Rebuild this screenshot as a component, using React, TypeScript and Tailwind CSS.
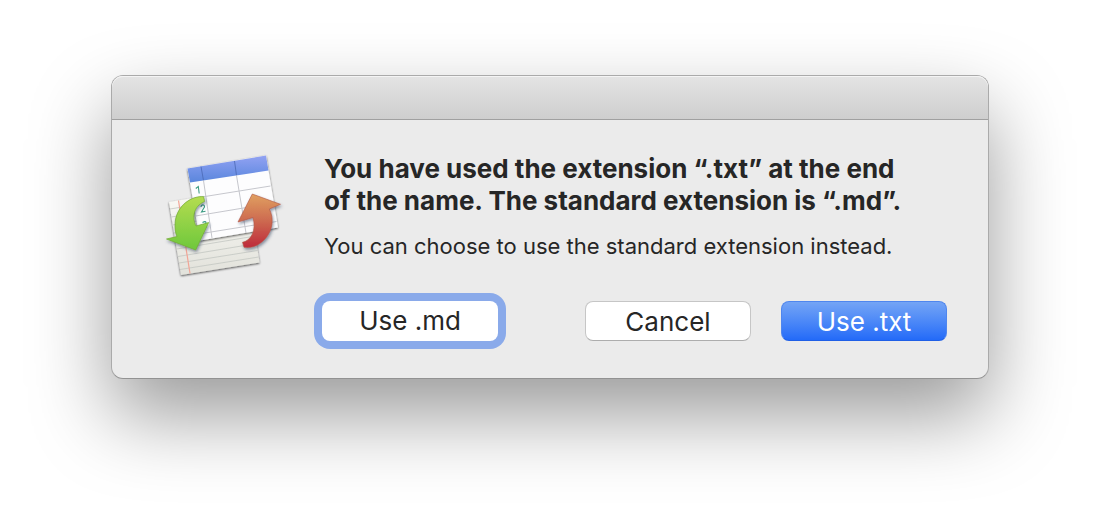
import React from 'react';

const AppIcon = () => (
  <svg viewBox="0 0 140 140" className="w-[140px] h-[140px] shrink-0" aria-hidden="true">
    <defs>
      <linearGradient id="header" x1="0" y1="0" x2="0" y2="1">
        <stop offset="0" stopColor="#92a2f2" />
        <stop offset="0.5" stopColor="#7594e8" />
        <stop offset="1" stopColor="#5a86dc" />
      </linearGradient>
      <linearGradient id="paper" x1="0" y1="0" x2="0" y2="1">
        <stop offset="0" stopColor="#fbfbf7" />
        <stop offset="1" stopColor="#e2e2db" />
      </linearGradient>
      <linearGradient id="green" x1="0" y1="0" x2="0" y2="1">
        <stop offset="0" stopColor="#b4dc50" />
        <stop offset="1" stopColor="#6ec83c" />
      </linearGradient>
      <linearGradient id="red" x1="0" y1="0" x2="0" y2="1">
        <stop offset="0" stopColor="#e0a060" />
        <stop offset="0.5" stopColor="#cd6a50" />
        <stop offset="1" stopColor="#be2a3a" />
      </linearGradient>
      <filter id="drop" x="-20%" y="-20%" width="140%" height="140%">
        <feDropShadow dx="0" dy="1" stdDeviation="1.3" floodColor="#000" floodOpacity="0.7" />
      </filter>
      <filter id="arrowDrop" x="-20%" y="-20%" width="140%" height="140%">
        <feDropShadow dx="1" dy="2" stdDeviation="1.5" floodColor="#23304f" floodOpacity="0.5" />
      </filter>
    </defs>

    <g filter="url(#drop)">
      <path d="M14 57L93 44L104.500 117.500L26 130Z" fill="url(#paper)" />
    </g>
    <g stroke="#c3c6c1" strokeWidth="0.8">
      <path d="M15 64L94 51M16.300 72L95.300 59M17.600 80L96.600 67M19 88L98 75M20.300 96L99.300 83M21.600 104L100.600 91M23 111.500L101.600 98.500M24 118L102.600 105.500M25 124.500L103.600 112" />
    </g>
    <path d="M23.500 55.500L35 128.500" stroke="#f2a596" strokeWidth="1.200" />

    <g filter="url(#drop)">
      <path d="M32.500 23.500L111 10.500L123 82.500L45 95.500Z" fill="#fdfdfe" />
    </g>
    <path d="M32.500 23.500L111 10.500L113.500 25.500L35 37.500Z" fill="url(#header)" />
    <path d="M46 21.500L48.500 35.500M79.500 16L81.500 30.500" stroke="#4a68b4" strokeWidth="0.8" />
    <g stroke="#c6c7cd" strokeWidth="1" fill="none">
      <path d="M48.500 35.500L57 93M81.500 30.500L91 88M37.500 53.500L115.500 41M40.500 71L118.500 58M43.500 89L121.500 76.500" />
    </g>
    <g fill="none" stroke="#3c9c84" strokeWidth="1.100">
      <path d="M40.800 43.500L43.300 41.500L44.200 48.500" />
      <path d="M46 62Q46.500 59.500 48.500 60Q50.500 61 48.500 63.500L46.500 67L50.500 66.300" />
      <path d="M47.500 77.500Q51 75.500 51 78Q51 79.500 49 79.700Q52 80 51 82.500" />
    </g>

    <path
      d="M48.700 51.700C37 50.500 22.500 60 20.300 76C19.600 82.500 20.300 88 22 91.500L11.500 94L40.700 105L53.700 77.500L41 81C37 73 38 61.500 49.500 56.500Z"
      fill="url(#green)" stroke="#72aa32" strokeWidth="0.7" filter="url(#arrowDrop)"
    />
    <path
      d="M97.300 49L125.500 59.300L114.300 64C119 73 118 85 110 94C103 101.500 96 103 89 102.300L87.500 97.300C96.500 95.500 101.500 85 98 72.500L83 77Z"
      fill="url(#red)" stroke="#b05845" strokeWidth="0.6" filter="url(#arrowDrop)"
    />
  </svg>
);

const App = () => {
  return (
    <main className="min-h-screen bg-white px-[111px] py-[75px] font-['Inter',sans-serif] text-[#262626]">
      <div
        role="alertdialog"
        aria-labelledby="dialog-title"
        aria-describedby="dialog-text"
        className="w-full rounded-xl border border-[#aaaaaa] border-b-[#929292] bg-[#ebebeb] shadow-[0_36px_80px_rgba(0,0,0,0.4)]"
      >
        <div className="h-11 rounded-t-[11px] border-b border-[#a0a0a0] bg-linear-to-b from-[#e4e4e4] to-[#cecece] shadow-[inset_0_1px_0_#f4f4f4]" />
        <div className="flex gap-[27px] pt-[25px] pr-[41px] pb-[37px] pl-[43px]">
          <AppIcon />
          <div className="min-w-0 flex-1 pt-2">
            <h1 id="dialog-title" className="pl-0.5 text-[26px] leading-8 font-bold">
              You have used the extension “.txt” at the end
              <br />
              of the name. The standard extension is “.md”.
            </h1>
            <p id="dialog-text" className="mt-[13px] pl-0.5 text-[22px] leading-8">
              You can choose to use the standard extension instead.
            </p>
            <div className="mt-[39px] flex items-center justify-between text-[26px]">
              <button
                type="button"
                className="h-10 w-[176px] rounded-lg bg-white pb-0.5 shadow-[0_0_0_8px_#8aaaea] outline-none"
              >
                Use .md
              </button>
              <div className="flex gap-[30px]">
                <button
                  type="button"
                  className="h-10 w-[166px] rounded-lg border border-[#c6c6c6] border-b-[#adadad] bg-white pb-0.5"
                >
                  Cancel
                </button>
                <button
                  type="button"
                  className="h-10 w-[166px] rounded-lg border border-[#4f86ee] border-b-[#1f5fe6] bg-linear-to-b from-[#74a4f5] to-[#236af8] pb-0.5 text-white"
                >
                  Use .txt
                </button>
              </div>
            </div>
          </div>
        </div>
      </div>
    </main>
  );
};

export default App;
